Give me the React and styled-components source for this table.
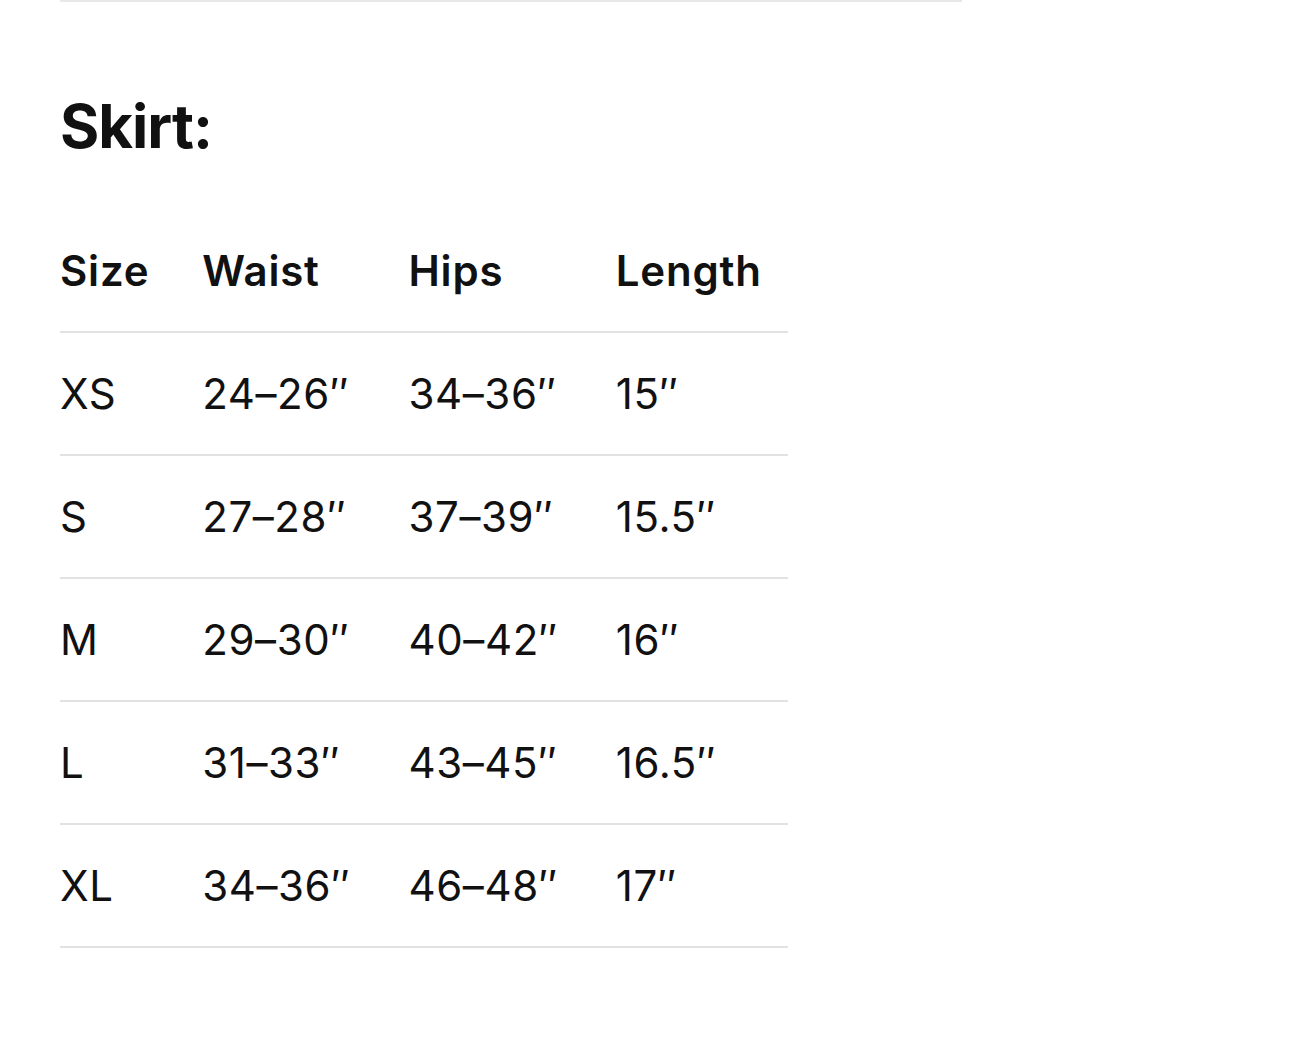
import React from 'react'
import styled, { createGlobalStyle } from 'styled-components'

const GlobalStyle = createGlobalStyle`
  html, body {
    margin: 0;
    padding: 0;
    background: #fff;
  }
  body {
    font-family: Inter, "Noto Sans", "Liberation Sans", sans-serif;
    color: #111;
    -webkit-font-smoothing: antialiased;
  }
`

const sizes = [
  { size: 'XS', waist: '24–26″', hips: '34–36″', length: '15″' },
  { size: 'S', waist: '27–28″', hips: '37–39″', length: '15.5″' },
  { size: 'M', waist: '29–30″', hips: '40–42″', length: '16″' },
  { size: 'L', waist: '31–33″', hips: '43–45″', length: '16.5″' },
  { size: 'XL', waist: '34–36″', hips: '46–48″', length: '17″' },
]

const columns = [
  { key: 'size', label: 'Size', width: 142 },
  { key: 'waist', label: 'Waist', width: 206 },
  { key: 'hips', label: 'Hips', width: 207 },
  { key: 'length', label: 'Length', width: 172 },
]

const App = () => {
  return (
    <>
      <GlobalStyle />
      <Page>
        <TopRule />
        <Heading>Skirt:</Heading>
        <Table>
          <colgroup>
            {columns.map((col) => (
              <col key={col.key} style={{ width: col.width }} />
            ))}
          </colgroup>
          <thead>
            <tr>
              {columns.map((col) => (
                <HeadCell key={col.key}>{col.label}</HeadCell>
              ))}
            </tr>
          </thead>
          <tbody>
            {sizes.map((row) => (
              <tr key={row.size}>
                {columns.map((col) => (
                  <Cell key={col.key}>{row[col.key]}</Cell>
                ))}
              </tr>
            ))}
          </tbody>
        </Table>
      </Page>
    </>
  )
}

const Page = styled.main`
  padding: 0 0 80px 60px;
`

const TopRule = styled.div`
  width: 902px;
  height: 2px;
  background: #e8e8e8;
`

const Heading = styled.h2`
  margin: 0;
  padding-top: 88px;
  font-size: 60px;
  line-height: 72px;
  font-weight: 700;
  letter-spacing: -1px;
`

const Table = styled.table`
  margin-top: 48px;
  width: 728px;
  border-collapse: collapse;
  table-layout: fixed;
`

const HeadCell = styled.th`
  height: 121px;
  padding: 0;
  text-align: left;
  vertical-align: middle;
  font-size: 42px;
  font-weight: 600;
  letter-spacing: 0.8px;
  border-bottom: 2px solid #e2e2e2;
`

const Cell = styled.td`
  height: 121px;
  padding: 0;
  vertical-align: middle;
  font-size: 42px;
  font-weight: 400;
  letter-spacing: 0.6px;
  border-bottom: 2px solid #e2e2e2;
`

export default App
